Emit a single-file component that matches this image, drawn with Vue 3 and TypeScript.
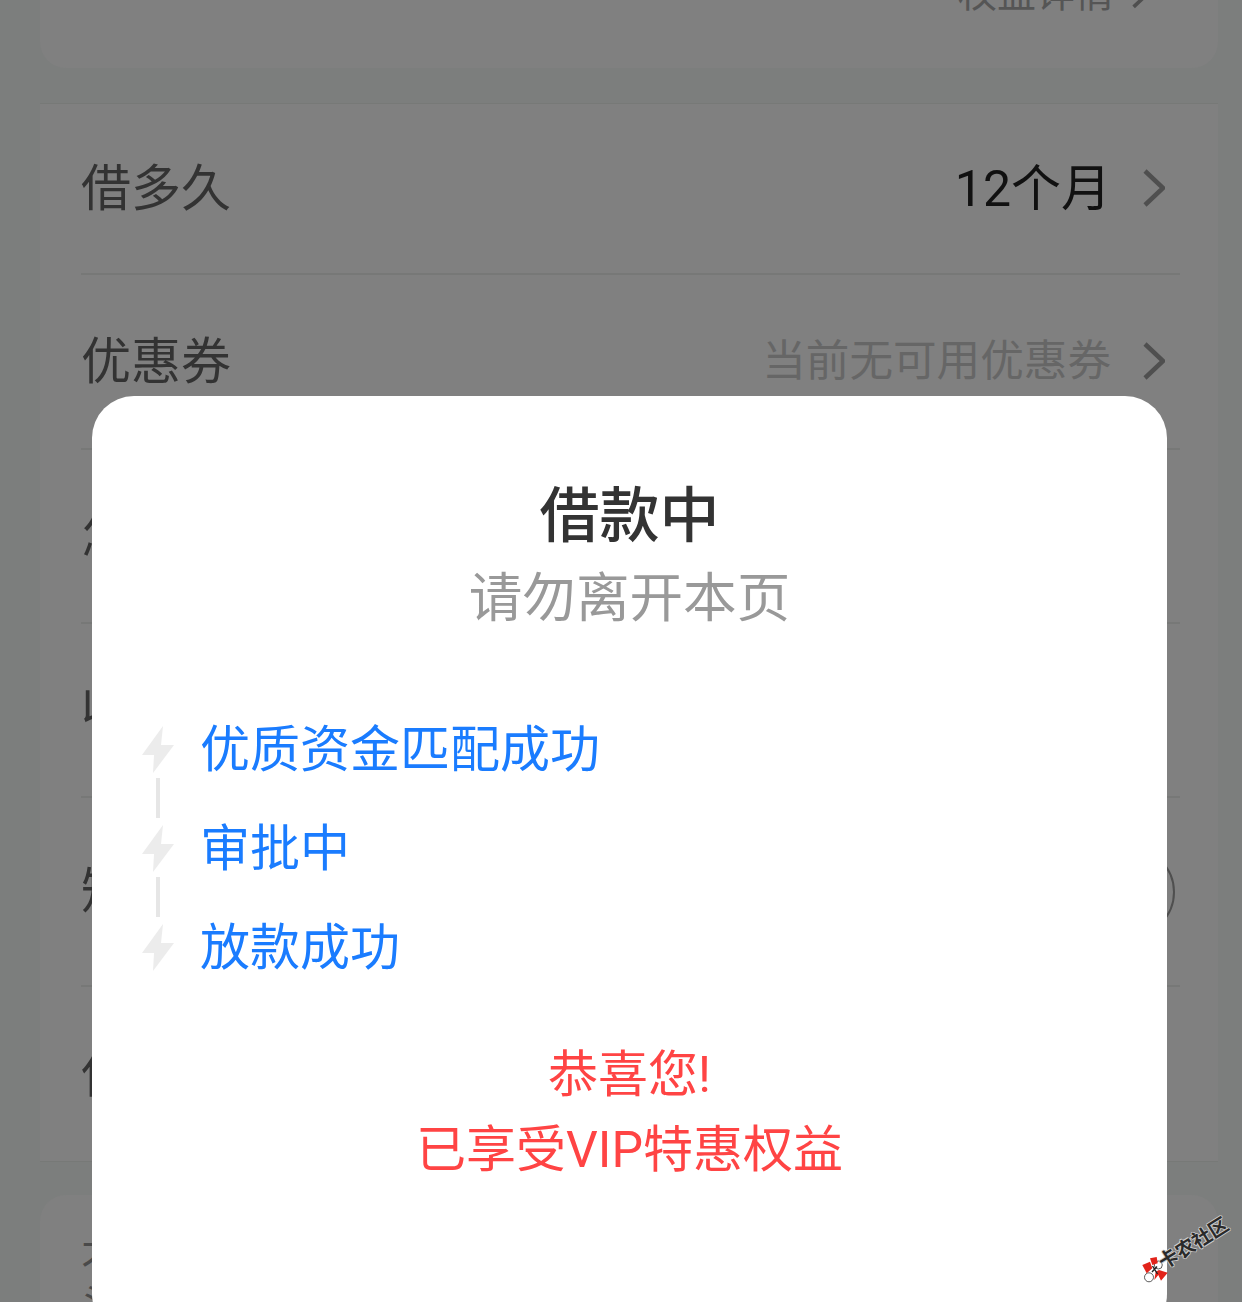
<script setup lang="ts">
interface Row {
  label: string
  height: number
  value?: string
  muted?: boolean
  chevron?: boolean
  circle?: boolean
}
const rows: Row[] = [
  { label: '借多久', height: 171, value: '12个月', chevron: true },
  { label: '优惠券', height: 175, value: '当前无可用优惠券', muted: true, chevron: true },
  { label: '怎么还', height: 174 },
  { label: '收款账户', height: 174 },
  { label: '短信验证', height: 189, circle: true },
  { label: '使用', height: 175 },
]
const steps = ['优质资金匹配成功', '审批中', '放款成功']
</script>

<template>
  <div class="screen">
    <section class="card top">
      <div class="benefit">权益详情
        <svg class="chev small" viewBox="0 0 22 38"><path d="M2 2 L20 19 L2 36" /></svg>
      </div>
    </section>

    <section class="card list">
      <div
        v-for="(r, i) in rows"
        :key="i"
        class="row"
        :class="{ last: i === rows.length - 1 }"
        :style="{ height: r.height + 'px' }"
      >
        <span class="label">{{ r.label }}</span>
        <span class="right">
          <span v-if="r.value" class="value" :class="{ muted: r.muted }">{{ r.value }}</span>
          <svg v-if="r.chevron" class="chev" viewBox="0 0 22 38"><path d="M2 2 L20 19 L2 36" /></svg>
          <span v-if="r.circle" class="circle"></span>
        </span>
      </div>
    </section>

    <section class="card bottom">
      <div class="bottom-text">不<br />头</div>
    </section>

    <div class="overlay">
      <div class="modal">
        <h1 class="title">借款中</h1>
        <p class="sub">请勿离开本页</p>
        <ul class="steps">
          <li v-for="(s, i) in steps" :key="s" class="step">
            <span class="node">
              <svg class="bolt" viewBox="0 0 32 48"><path d="M21 0 L0 29 L12 29 L11 47 L32 19 L19 19 Z" /></svg>
              <span v-if="i < steps.length - 1" class="line"></span>
            </span>
            <span class="step-text">{{ s }}</span>
          </li>
        </ul>
        <div class="congrats">
          <div>恭喜您!</div>
          <div>已享受VIP特惠权益</div>
        </div>
      </div>
    </div>

    <svg class="mark-logo" viewBox="0 0 26 26">
      <circle cx="16.3" cy="8" r="4" fill="#fff" stroke="#333" stroke-width="0.8" />
      <circle cx="7" cy="20.3" r="4.5" fill="#fff" stroke="#333" stroke-width="0.8" />
      <path d="M0.3 8 L8 4.7 L10.3 11.3 L4.7 16.3 Z" fill="#e2231a" />
      <path d="M8 1.3 L14.7 0 L15.7 6.3 L10.3 8 Z" fill="#e2231a" />
      <path d="M13.7 14.7 L17 13 L25.7 15.7 L19 23.7 L16.3 18 L12.3 23 Z" fill="#e2231a" />
      <path d="M10.5 9 L15.5 17 M15 9.5 L10 15" stroke="#222" stroke-width="1.4" fill="none" />
    </svg>
    <span class="mark-text">卡农社区</span>
  </div>
</template>

<style>
html, body { margin: 0; padding: 0; background: #7c7e7d; }
</style>

<style scoped>
.screen {
  position: relative;
  width: 1242px;
  height: 1302px;
  overflow: hidden;
  background: #7c7e7d;
  font-family: Roboto, "Noto Sans CJK SC", "Noto Sans", sans-serif;
  box-sizing: border-box;
  padding: 0 24px 0 40px;
}
.card { background: #808080; }
.top {
  height: 68px;
  border-radius: 0 0 26px 26px;
  overflow: hidden;
  display: flex;
  justify-content: flex-end;
  align-items: flex-end;
  padding: 0 68px 54px 0;
  margin-bottom: 35px;
  box-sizing: border-box;
}
.benefit {
  display: flex;
  align-items: center;
  gap: 18px;
  font-size: 39px;
  line-height: 40px;
  color: #555;
  white-space: nowrap;
}
.list {
  border-top: 1px solid #777977;
  border-bottom: 1px solid #777977;
  padding: 0 38px 0 41px;
  height: 1059px;
  box-sizing: border-box;
  margin-bottom: 33px;
}
.row {
  display: flex;
  align-items: center;
  justify-content: space-between;
  border-bottom: 2px solid #777877;
  box-sizing: border-box;
}
.row.last { border-bottom: none; }
.label {
  font-size: 50px;
  color: #333;
  line-height: 60px;
}
.right {
  display: flex;
  align-items: center;
  gap: 32px;
  padding-right: 15px;
}
.value {
  font-size: 50px;
  line-height: 60px;
  color: #111;
}
.value.muted {
  font-size: 43.6px;
  color: #666;
}
.chev {
  width: 22px;
  height: 38px;
  margin-top: -2px;
  fill: none;
  stroke: #4f4f4f;
  stroke-width: 4.5;
  flex: none;
}
.chev.small { width: 18px; height: 32px; }
.circle {
  width: 90px;
  height: 90px;
  border-radius: 50%;
  border: 2px solid #4f4f4f;
  box-sizing: border-box;
  margin-right: -10px;
}
.bottom {
  height: 200px;
  border-radius: 26px 26px 0 0;
  padding: 44px 0 0 41px;
}
.bottom-text {
  font-size: 40px;
  line-height: 44px;
  color: #4a4a4a;
}
.overlay {
  position: absolute;
  left: 92px;
  top: 396px;
}
.modal {
  width: 1075px;
  height: 940px;
  background: #fff;
  border-radius: 42px;
  box-sizing: border-box;
  padding-top: 83px;
  text-align: center;
}
.title {
  margin: 0;
  font-size: 60px;
  line-height: 76px;
  font-weight: 500;
  color: #333;
}
.sub {
  margin: 7px 0 0;
  font-size: 53.6px;
  line-height: 74px;
  color: #999;
}
.steps {
  list-style: none;
  margin: 83px 0 0;
  padding: 0 0 0 50px;
  text-align: left;
}
.step {
  display: flex;
  height: 99px;
  align-items: flex-start;
}
.node {
  position: relative;
  width: 32px;
  height: 99px;
  flex: none;
  margin-right: 26px;
}
.bolt {
  position: absolute;
  left: 0;
  top: 7px;
  width: 32px;
  height: 48px;
  fill: #ececec;
}
.line {
  position: absolute;
  left: 14px;
  top: 59px;
  width: 4px;
  height: 40px;
  background: #e6e6e6;
}
.step-text {
  font-size: 50px;
  line-height: 60px;
  margin-top: 1px;
  color: #1a7cff;
}
.congrats {
  margin-top: 22px;
  font-size: 50px;
  line-height: 75px;
  color: #ff4444;
}
.mark-logo {
  position: absolute;
  left: 1142px;
  top: 1257px;
  width: 26px;
  height: 26px;
}
.mark-text {
  position: absolute;
  left: 1155px;
  top: 1230px;
  font-size: 19.5px;
  font-weight: 700;
  line-height: 28px;
  color: #2a2a2a;
  white-space: nowrap;
  transform: rotate(-32deg);
  text-shadow: 1px 0 #ccc, -1px 0 #ccc, 0 1px #ccc, 0 -1px #ccc;
}
</style>
